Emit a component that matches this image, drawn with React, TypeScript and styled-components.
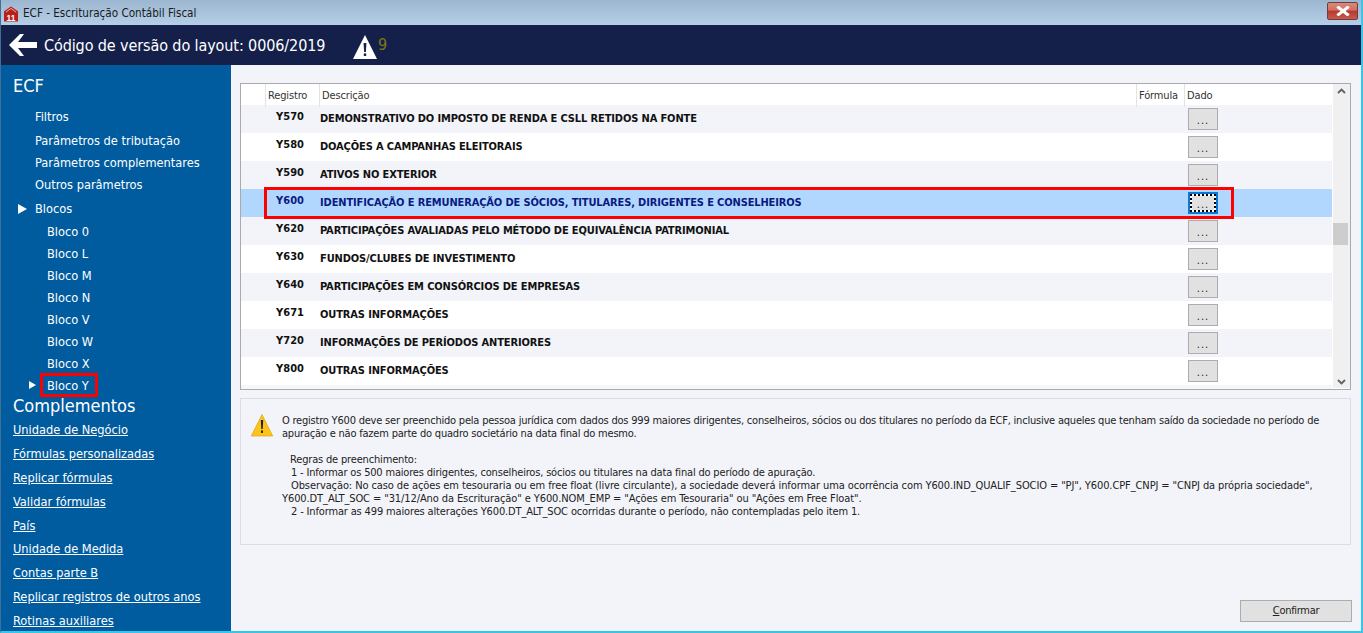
import React from "react";
import styled, { createGlobalStyle } from "styled-components";

const FONT = `"DejaVu Sans Condensed", "DejaVu Sans", sans-serif`;

const Global = createGlobalStyle`
  html, body { margin: 0; padding: 0; height: 100%; overflow: hidden; background: #f2f4f9; }
  #root { height: 100%; }
  * { box-sizing: border-box; }
`;

const Window = styled.div`
  width: 1363px;
  height: 633px;
  display: flex;
  flex-direction: column;
  overflow: hidden;
  position: relative;
  font-family: ${FONT};
  font-stretch: condensed;
  font-size: 11px;
  color: #111;
  border-right: 2px solid #35c6ea;
  border-bottom: 2px solid #35c6ea;
  border-left: 1px solid #3f6f96;
`;

const TitleBar = styled.div`
  height: 25px;
  flex: none;
  display: flex;
  align-items: center;
  padding: 1px 3px 0 3px;
  gap: 5px;
  background: linear-gradient(#9db6cf, #b5cfe8);
  font-size: 11.6px;
  color: #1a1a1a;
`;

const TitleText = styled.span`
  flex: 1;
`;

const CloseButton = styled.div`
  width: 31px;
  height: 18px;
  margin-top: -4px;
  border: 1px solid #6f3d3d;
  border-radius: 2px;
  background: linear-gradient(#d98a7c 0%, #cf6f60 45%, #b8392c 50%, #c65a4c 100%);
  display: flex;
  align-items: center;
  justify-content: center;
`;

const HeaderBar = styled.div`
  height: 40px;
  flex: none;
  display: flex;
  align-items: center;
  background: #14204a;
  color: #fff;
  padding-left: 8px;
`;

const HeaderTitle = styled.span`
  font-size: 16px;
  letter-spacing: -0.1px;
  margin-left: 7px;
  width: 281px;
  white-space: nowrap;
`;

const WarningSpacer = styled.span`
  width: 28px;
  flex: none;
`;

const WarningSlot = styled.span`
  display: flex;
  margin-top: 4px;
`;

const WarnCount = styled.span`
  font-size: 16px;
  color: #7d7a12;
  margin: -2px 0 0 1px;
`;

const Body = styled.div`
  flex: 1;
  display: flex;
  min-height: 0;
`;

const Sidebar = styled.nav`
  width: 230px;
  flex: none;
  background: #005c9f;
  color: #fff;
  padding: 10px 0 0 12px;
  font-size: 12.7px;
  overflow: hidden;
`;

const SectionTitle = styled.div<{ $mt?: number }>`
  font-size: 18px;
  line-height: 22px;
  margin-top: ${(p) => p.$mt ?? 0}px;
`;

const MenuList = styled.div`
  margin-top: 9px;
  display: flex;
  flex-direction: column;
`;

const MenuItem = styled.div<{ $indent: number; $mb?: number }>`
  height: 22px;
  line-height: 22px;
  padding-left: ${(p) => p.$indent}px;
  margin-bottom: ${(p) => p.$mb ?? 0}px;
  position: relative;
  white-space: nowrap;
`;

const Caret = styled.span<{ $left: number; $w: number; $h: number; $top: number }>`
  position: absolute;
  left: ${(p) => p.$left}px;
  top: ${(p) => p.$top}px;
  width: 0;
  height: 0;
  border-left: ${(p) => p.$w}px solid #fff;
  border-top: ${(p) => p.$h}px solid transparent;
  border-bottom: ${(p) => p.$h}px solid transparent;
`;

const LinkList = styled.div`
  display: flex;
  flex-direction: column;
  margin-top: 1px;
`;

const LinkItem = styled.a`
  height: 23.9px;
  line-height: 24px;
  color: #fff;
  text-decoration: underline;
  white-space: nowrap;
`;

const Main = styled.main`
  flex: 1;
  min-width: 0;
  display: flex;
  flex-direction: column;
  padding: 18px 10px 10px 9px;
  background: #f2f4f9;
`;

const TableBox = styled.div`
  height: 307px;
  flex: none;
  border: 1px solid #aaa;
  background: #fff;
  display: flex;
`;

const TableInner = styled.div`
  flex: 1;
  min-width: 0;
  overflow: hidden;
  background: #f5f6f9;
`;

const HeaderRow = styled.div`
  display: grid;
  grid-template-columns: 25px 54px 817px 48px 1fr;
  height: 21px;
  background: #fff;
`;

const HeadCell = styled.div`
  border-right: 1px solid #e3e3e3;
  padding-left: 2px;
  line-height: 23px;
  color: #333;
  letter-spacing: -0.15px;
  &:last-child { border-right: 0; }
`;

const Row = styled.div<{ $tone: "grey" | "white" | "selected" }>`
  display: grid;
  grid-template-columns: 25px 54px 865px 1fr;
  height: 28px;
  background: ${(p) => (p.$tone === "selected" ? "#b2d7ff" : p.$tone === "grey" ? "#f2f4f9" : "#fff")};
  color: ${(p) => (p.$tone === "selected" ? "#0a1a80" : "#111")};
  font-weight: 700;
`;

const Code = styled.div`
  grid-column: 2;
  text-align: center;
  line-height: 24px;
  padding-right: 6px;
`;

const Desc = styled.div`
  line-height: 28px;
  white-space: nowrap;
  letter-spacing: -0.13px;
`;

const DotsButton = styled.div<{ $focus?: boolean }>`
  width: 30px;
  height: 22px;
  margin: 3px 0 0 3px;
  background: #e1e1e1;
  border: 1px solid #adadad;
  font-weight: 400;
  color: #222;
  text-align: center;
  line-height: 24px;
  letter-spacing: 1px;
  ${(p) =>
    p.$focus
      ? `border: 2px solid #0a78d7; line-height: 22px; box-shadow: inset 0 0 0 2px #fff; outline: 2px dotted #000; outline-offset: -4px;`
      : ""}
`;

const ScrollBar = styled.div`
  width: 18px;
  flex: none;
  background: #f0f0f0;
  border-left: 1px solid #fff;
  margin-bottom: 1px;
  display: flex;
  flex-direction: column;
  align-items: center;
  justify-content: space-between;
  position: relative;
  padding: 4px 1px 3px 0;
`;

const ScrollThumb = styled.div`
  position: absolute;
  top: 139px;
  left: 0;
  width: 15px;
  height: 22px;
  background: #cdcdcd;
`;

const InfoPanel = styled.div`
  height: 147px;
  flex: none;
  margin-top: 8px;
  border: 1px solid #dcdde2;
  padding: 15px 8px 0 10px;
  display: flex;
  gap: 9px;
  background: #f2f4f9;
  overflow: hidden;
`;

const InfoText = styled.div`
  display: flex;
  flex-direction: column;
  color: #222;
`;

const InfoLine = styled.div<{ $ls: number; $indent?: number }>`
  height: 13px;
  line-height: 13px;
  white-space: pre;
  letter-spacing: ${(p) => p.$ls}px;
  padding-left: ${(p) => p.$indent ?? 0}px;
`;

const IconSlot = styled.div`
  flex: none;
  width: 22px;
  height: 23px;
`;

const Footer = styled.div`
  flex: 1;
  display: flex;
  justify-content: flex-end;
  align-items: flex-end;
`;

const ConfirmButton = styled.div`
  width: 112px;
  height: 22px;
  margin-right: -1px;
  margin-bottom: -1px;
  background: #e1e1e1;
  border: 1px solid #adadad;
  text-align: center;
  line-height: 20px;
  color: #222;
  letter-spacing: -0.3px;
`;

const Underlined = styled.span`
  text-decoration: underline;
`;

const Highlight = styled.div<{ $x: number; $y: number; $w: number; $h: number }>`
  position: absolute;
  left: ${(p) => p.$x}px;
  top: ${(p) => p.$y}px;
  width: ${(p) => p.$w}px;
  height: ${(p) => p.$h}px;
  border: 3px solid #f00;
  pointer-events: none;
`;

const AppLogo = () => (
  <svg width="14" height="16" viewBox="0 0 15 16" style={{ flex: "none", marginTop: 1 }}>
    <path d="M0 5 L7.5 0 L15 5 V16 H0Z" fill="#b8201c" />
    <path d="M2 6 L7.5 2 L13 6" fill="none" stroke="#f1b7b0" strokeWidth="1" />
    <text x="7.5" y="15" textAnchor="middle" fontSize="9" fontWeight="700" fontFamily="Liberation Sans, sans-serif" fill="#fff">11</text>
  </svg>
);

const CloseIcon = () => (
  <svg width="14" height="10" viewBox="0 0 14 10">
    <path d="M2.5 1.5 L11.5 8.5 M11.5 1.5 L2.5 8.5" stroke="#fff" strokeWidth="3" strokeLinecap="square" />
  </svg>
);

const BackArrow = () => (
  <svg width="28" height="22" viewBox="0 0 28 22">
    <path d="M11 0 L15 0 L9 8 L28 8 L28 14 L9 14 L15 22 L11 22 L0 11Z" fill="#fff" />
  </svg>
);

const WarningWhite = () => (
  <svg width="24" height="24" viewBox="0 0 24 24">
    <path d="M12 0 L24 24 L0 24Z" fill="#fff" />
    <path d="M10.6 8 H13.4 L12.9 17 H11.1Z" fill="#14204a" />
    <rect x="10.8" y="18.4" width="2.4" height="2.6" fill="#14204a" />
  </svg>
);

const WarningYellow = () => (
  <svg width="22" height="23" viewBox="0 0 22 23">
    <path d="M11 0.5 L21.7 22 H0.3Z" fill="#fcc419" stroke="#d9a520" strokeWidth="0.7" strokeLinejoin="round" />
    <path d="M9.8 6 H12.2 L11.7 15 H10.3Z" fill="#222" />
    <rect x="10" y="16.5" width="2" height="2.4" fill="#222" />
  </svg>
);

const Chevron = ({ down }: { down?: boolean }) => (
  <svg width="9" height="6" viewBox="0 0 9 6">
    <path d={down ? "M1 1 L4.5 4.5 L8 1" : "M1 5 L4.5 1.5 L8 5"} fill="none" stroke="#606060" strokeWidth="1.8" />
  </svg>
);

const blocks = ["Bloco 0", "Bloco L", "Bloco M", "Bloco N", "Bloco V", "Bloco W", "Bloco X"];
const links = [
  "Unidade de Negócio",
  "Fórmulas personalizadas",
  "Replicar fórmulas",
  "Validar fórmulas",
  "País",
  "Unidade de Medida",
  "Contas parte B",
  "Replicar registros de outros anos",
  "Rotinas auxiliares",
];

const rows: { code: string; desc: string; tone: "grey" | "white" | "selected" }[] = [
  { code: "Y570", desc: "DEMONSTRATIVO DO IMPOSTO DE RENDA E CSLL RETIDOS NA FONTE", tone: "grey" },
  { code: "Y580", desc: "DOAÇÕES A CAMPANHAS ELEITORAIS", tone: "white" },
  { code: "Y590", desc: "ATIVOS NO EXTERIOR", tone: "grey" },
  { code: "Y600", desc: "IDENTIFICAÇÃO E REMUNERAÇÃO DE SÓCIOS, TITULARES, DIRIGENTES E CONSELHEIROS", tone: "selected" },
  { code: "Y620", desc: "PARTICIPAÇÕES AVALIADAS PELO MÉTODO DE EQUIVALÊNCIA PATRIMONIAL", tone: "grey" },
  { code: "Y630", desc: "FUNDOS/CLUBES DE INVESTIMENTO", tone: "white" },
  { code: "Y640", desc: "PARTICIPAÇÕES EM CONSÓRCIOS DE EMPRESAS", tone: "grey" },
  { code: "Y671", desc: "OUTRAS INFORMAÇÕES", tone: "white" },
  { code: "Y720", desc: "INFORMAÇÕES DE PERÍODOS ANTERIORES", tone: "grey" },
  { code: "Y800", desc: "OUTRAS INFORMAÇÕES", tone: "white" },
];

const infoLines: { text: string; ls: number; indent?: number }[] = [
  { text: "O registro Y600 deve ser preenchido pela pessoa jurídica com dados dos 999 maiores dirigentes, conselheiros, sócios ou dos titulares no período da ECF, inclusive aqueles que tenham saído da sociedade no período de", ls: -0.21 },
  { text: "apuração e não fazem parte do quadro societário na data final do mesmo.", ls: -0.2 },
  { text: " ", ls: 0 },
  { text: "Regras de preenchimento:", ls: -0.17, indent: 8 },
  { text: "1 - Informar os 500 maiores dirigentes, conselheiros, sócios ou titulares na data final do período de apuração.", ls: -0.18, indent: 9 },
  { text: 'Observação: No caso de ações em tesouraria ou em free float (livre circulante), a sociedade deverá informar uma ocorrência com Y600.IND_QUALIF_SOCIO = "PJ", Y600.CPF_CNPJ = "CNPJ da própria sociedade",', ls: -0.1, indent: 9 },
  { text: 'Y600.DT_ALT_SOC = "31/12/Ano da Escrituração" e Y600.NOM_EMP = "Ações em Tesouraria" ou "Ações em Free Float".', ls: -0.1 },
  { text: "2 - Informar as 499 maiores alterações Y600.DT_ALT_SOC ocorridas durante o período, não contempladas pelo item 1.", ls: -0.15, indent: 9 },
];

export default function App() {
  return (
    <>
      <Global />
      <Window>
        <TitleBar>
          <AppLogo />
          <TitleText>ECF - Escrituração Contábil Fiscal</TitleText>
          <CloseButton>
            <CloseIcon />
          </CloseButton>
        </TitleBar>
        <HeaderBar>
          <BackArrow />
          <HeaderTitle>Código de versão do layout: 0006/2019</HeaderTitle>
          <WarningSpacer />
          <WarningSlot>
            <WarningWhite />
          </WarningSlot>
          <WarnCount>9</WarnCount>
        </HeaderBar>
        <Body>
          <Sidebar>
            <SectionTitle>ECF</SectionTitle>
            <MenuList>
              <MenuItem $indent={22} $mb={2}>Filtros</MenuItem>
              <MenuItem $indent={22}>Parâmetros de tributação</MenuItem>
              <MenuItem $indent={22}>Parâmetros complementares</MenuItem>
              <MenuItem $indent={22} $mb={2}>Outros parâmetros</MenuItem>
              <MenuItem $indent={22} $mb={1}>
                <Caret $left={5} $w={9} $h={5} $top={6} />
                Blocos
              </MenuItem>
              {blocks.map((t) => (
                <MenuItem key={t} $indent={34}>{t}</MenuItem>
              ))}
              <MenuItem $indent={34}>
                <Caret $left={16} $w={7} $h={4} $top={6} />
                Bloco Y
              </MenuItem>
            </MenuList>
            <SectionTitle $mt={-2}>Complementos</SectionTitle>
            <LinkList>
              {links.map((t) => (
                <LinkItem key={t}>{t}</LinkItem>
              ))}
            </LinkList>
          </Sidebar>
          <Main>
            <TableBox>
              <TableInner>
                <HeaderRow>
                  <HeadCell />
                  <HeadCell>Registro</HeadCell>
                  <HeadCell>Descrição</HeadCell>
                  <HeadCell>Fórmula</HeadCell>
                  <HeadCell>Dado</HeadCell>
                </HeaderRow>
                {rows.map((r) => (
                  <Row key={r.code} $tone={r.tone}>
                    <Code>{r.code}</Code>
                    <Desc>{r.desc}</Desc>
                    <DotsButton $focus={r.tone === "selected"}>...</DotsButton>
                  </Row>
                ))}
              </TableInner>
              <ScrollBar>
                <Chevron />
                <ScrollThumb />
                <Chevron down />
              </ScrollBar>
            </TableBox>
            <InfoPanel>
              <IconSlot>
                <WarningYellow />
              </IconSlot>
              <InfoText>
                {infoLines.map((l, i) => (
                  <InfoLine key={i} $ls={l.ls} $indent={l.indent}>{l.text}</InfoLine>
                ))}
              </InfoText>
            </InfoPanel>
            <Footer>
              <ConfirmButton>
                <Underlined>C</Underlined>onfirmar
              </ConfirmButton>
            </Footer>
          </Main>
        </Body>
        <Highlight $x={263} $y={187} $w={970} $h={32} />
        <Highlight $x={39} $y={373} $w={58} $h={24} />
      </Window>
    </>
  );
}
